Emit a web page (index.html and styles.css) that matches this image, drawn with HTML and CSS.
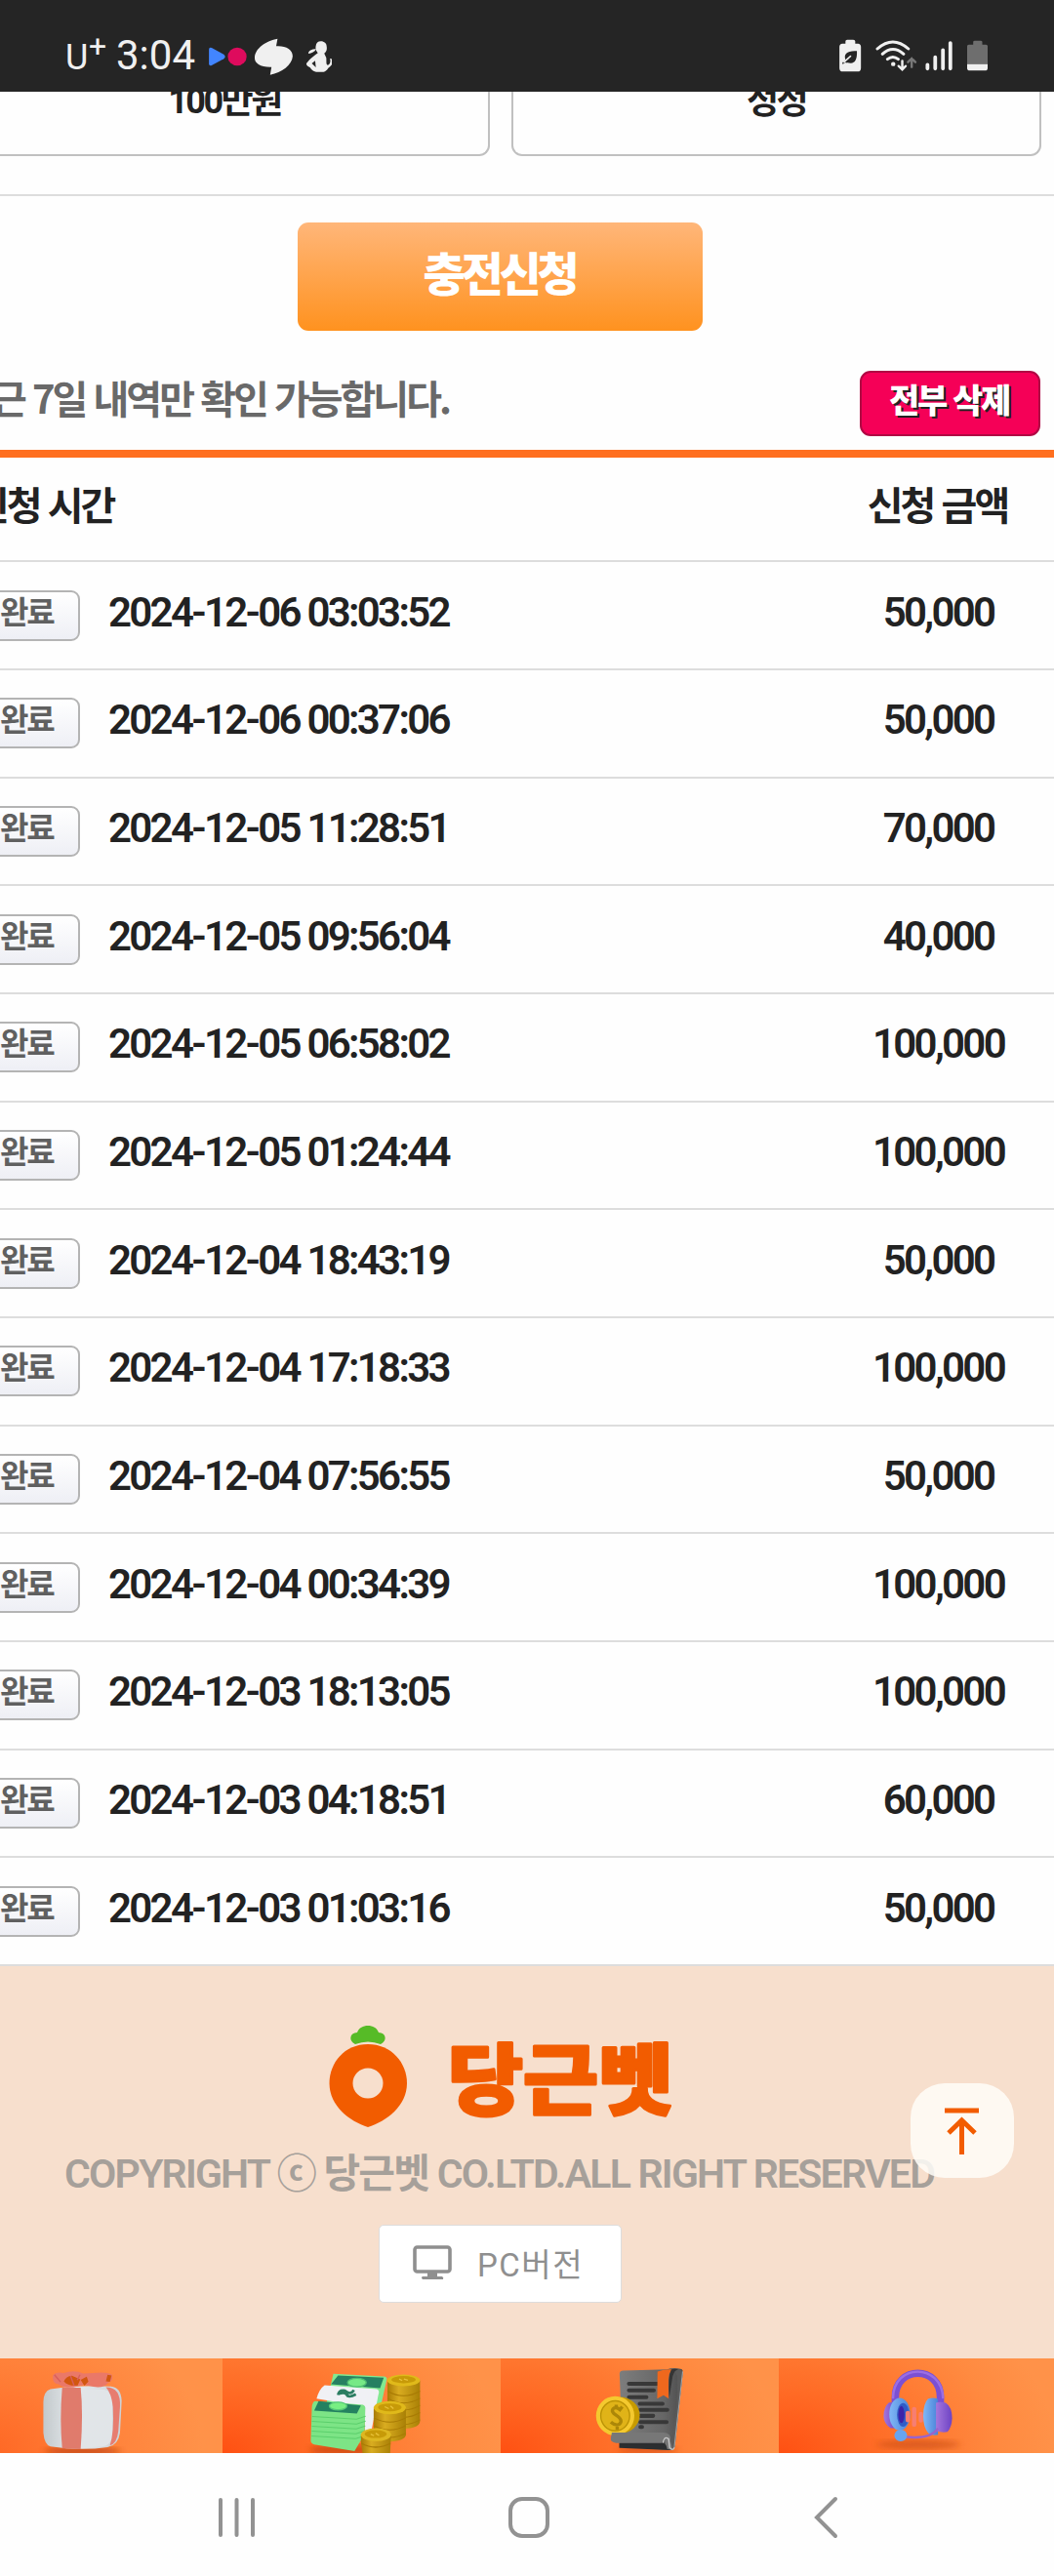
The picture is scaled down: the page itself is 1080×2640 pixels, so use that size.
FILE: index.html
```html
<!DOCTYPE html>
<html lang="ko">
<head>
<meta charset="utf-8">
<title>충전신청</title>
<link rel="stylesheet" href="styles.css">
</head>
<body>
<div class="screen">
  <header class="status">
    <span class="carrier">U</span><span class="carrier-plus">+</span>
    <span class="clock">3:04</span>
    <svg class="status-left" width="130" height="40" viewBox="610 115 377.5 120" preserveAspectRatio="none">
      <path d="M622 153q0-8 8-5l36 20q8 7 0 14l-36 20q-8 3-8-5z" fill="#4285ff"/>
      <ellipse cx="706" cy="175" rx="28" ry="28" fill="#de0b5d"/>
      <path d="M826 120L822 143C850 141 871 153 871 174C869 200 839 224 804 231L808 207C776 208 757 196 758 177C760 149 792 126 826 120Z" fill="#f0f0f0"/>
      <g fill="#f0f0f0"><path d="M940 142c1-9 6-14 15-14 10 0 17 7 17 15 2 12-1 18-7 22l6 14c1 11-1 21 4 22 7-1 10-10 7-20 4-1 9 3 9 9 0 9-9 15-14 20-4 6-8 10-14 12h-22c-10-2-14-7-18-13-5-4-12-7-11-13l9-11c8-7 13-13 25-21-5-7-8-12-6-22z"/><path d="M918 162c3-6 12-11 23-10-5 9-13 13-23 14z"/></g>
      <path d="M938 188l2 20-12-12z" fill="#252525"/>
    </svg>
    <svg class="status-right" width="160" height="40" viewBox="920 115 464.6 120" preserveAspectRatio="none">
      <path d="M950 128q0-5 5-5h18q6 0 6 5v7h8q9 1 9 10v65q0 11-10 11h-44q-10 0-10-11v-65q0-9 9-10h9z" fill="#f0f0f0"/>
      <path d="M984 158c1 25-5 37-18 37-8 0-13-1-17-2-3 3-6 5-8 5v-5c4-1 7-5 9-9-6-17 5-28 34-26z" fill="#252525"/>
      <path d="M946 192q14-14 19-18" stroke="#f0f0f0" stroke-width="5" fill="none" stroke-linecap="round"/>
      <g fill="none" stroke="#f0f0f0" stroke-width="9" stroke-linecap="round"><path d="M1045 151q46-42 92 0"/><path d="M1060 167q31-29 63 0"/><path d="M1075 183q16-13 32 0"/></g>
      <circle cx="1092" cy="198" r="6.500" fill="#f0f0f0"/>
      <path d="M1119 188v26m-11-10l11 11 10-11" fill="none" stroke="#f0f0f0" stroke-width="7" stroke-linecap="round"/>
      <path d="M1147 207v-26m-11 11l11-11 11 11" fill="none" stroke="#777" stroke-width="7" stroke-linecap="round"/>
      <path d="M1194 200v12M1217 177v35M1240 155v57M1262 133v79" stroke="#f0f0f0" stroke-width="11" stroke-linecap="round"/>
      <path d="M1330 130q0-4 5-4h17q5 0 5 4v8h11q5 0 5 5v55h-61v-55q0-5 5-5h13z" fill="#6e6e6e"/>
      <path d="M1312 198h61v12q0 8-8 8h-45q-8 0-8-8z" fill="#f0f0f0"/>
    </svg>
  </header>

  <section class="amounts">
    <div class="amount-box"><span>100만원</span></div>
    <div class="amount-box reset"><span>정정</span></div>
  </section>

  <section class="submit-area"><button class="submit">충전신청</button></section>

  <section class="history-top">
    <p class="notice">최근 7일 내역만 확인 가능합니다.</p>
    <button class="delete-all">전부 삭제</button>
  </section>

  <section class="history">
    <div class="history-head"><span class="time-title">신청 시간</span><span class="amount-col">신청 금액</span></div>
    <div class="row"><span class="badge">완료</span><time>2024-12-06 03:03:52</time><span class="amount-col">50,000</span></div>
    <div class="row"><span class="badge">완료</span><time>2024-12-06 00:37:06</time><span class="amount-col">50,000</span></div>
    <div class="row"><span class="badge">완료</span><time>2024-12-05 11:28:51</time><span class="amount-col">70,000</span></div>
    <div class="row"><span class="badge">완료</span><time>2024-12-05 09:56:04</time><span class="amount-col">40,000</span></div>
    <div class="row"><span class="badge">완료</span><time>2024-12-05 06:58:02</time><span class="amount-col">100,000</span></div>
    <div class="row"><span class="badge">완료</span><time>2024-12-05 01:24:44</time><span class="amount-col">100,000</span></div>
    <div class="row"><span class="badge">완료</span><time>2024-12-04 18:43:19</time><span class="amount-col">50,000</span></div>
    <div class="row"><span class="badge">완료</span><time>2024-12-04 17:18:33</time><span class="amount-col">100,000</span></div>
    <div class="row"><span class="badge">완료</span><time>2024-12-04 07:56:55</time><span class="amount-col">50,000</span></div>
    <div class="row"><span class="badge">완료</span><time>2024-12-04 00:34:39</time><span class="amount-col">100,000</span></div>
    <div class="row"><span class="badge">완료</span><time>2024-12-03 18:13:05</time><span class="amount-col">100,000</span></div>
    <div class="row"><span class="badge">완료</span><time>2024-12-03 04:18:51</time><span class="amount-col">60,000</span></div>
    <div class="row"><span class="badge">완료</span><time>2024-12-03 01:03:16</time><span class="amount-col">50,000</span></div>
  </section>

  <footer class="footer">
    <svg class="logo" width="360" height="110" viewBox="333 2073 360 110">
      <path d="M377 2095C401 2095 417 2114 417 2135C417 2158 396 2174 377 2180C358 2174 337.500 2158 337.500 2135C337.500 2114 353 2095 377 2095Z" fill="#f25c00"/>
      <circle cx="377" cy="2135" r="15.500" fill="#f7dfcd"/>
      <path d="M364 2095C357 2092 358 2083 366 2083C368 2078 372 2076 377 2076C382 2076 386 2078 388 2083C396 2083 397 2092 390 2095Q377 2090 364 2095Z" fill="#56bb27"/>
      <text class="logo-text" x="459" y="2161" textLength="231" lengthAdjust="spacingAndGlyphs">당근벳</text>
    </svg>
    <p class="copyright">COPYRIGHT ⓒ 당근벳 CO.LTD.ALL RIGHT RESERVED</p>
    <a class="pc-version">
      <svg width="40" height="35" viewBox="0 0 40 35"><rect x="2" y="2" width="36" height="25" rx="2.500" fill="none" stroke="#8f8f8f" stroke-width="3.600"/><path d="M15 27h10v5h5q2 1 1 3H10q-2-2 0-3h5z" fill="#8f8f8f"/></svg>
      <span>PC버전</span>
    </a>
    <a class="to-top">
      <svg width="36" height="48" viewBox="0 0 36 48"><path d="M0 3h35M17.500 48V13M4 26l13.500-13L31 26" fill="none" stroke="#f25c00" stroke-width="5"/></svg>
    </a>
  </footer>

  <nav class="menu">
    <a class="menu-item first">
      <svg width="228" height="97" viewBox="0 652 662 290" preserveAspectRatio="none">
        <defs>
          <linearGradient id="white" x1="0" x2="1"><stop offset="0" stop-color="#c3c9cc"/><stop offset=".4" stop-color="#e6eaed"/><stop offset="1" stop-color="#cdd1d5"/></linearGradient>
          <linearGradient id="gold" x1="0" x2="1"><stop offset="0" stop-color="#a97b05"/><stop offset=".35" stop-color="#d9ac20"/><stop offset="1" stop-color="#a98006"/></linearGradient>
          <linearGradient id="grey" x1="0" x2="1"><stop offset="0" stop-color="#7d7d7d"/><stop offset=".7" stop-color="#666"/><stop offset="1" stop-color="#4b4b4b"/></linearGradient>
          <linearGradient id="purple" x1="0" x2="1"><stop offset="0" stop-color="#a476dc"/><stop offset="1" stop-color="#6d43c4"/></linearGradient>
          <linearGradient id="blue" x1="0" x2="1"><stop offset="0" stop-color="#80b8f6"/><stop offset="1" stop-color="#4a82d8"/></linearGradient>
          <filter id="soft"><feGaussianBlur stdDeviation="9"/></filter>
        </defs>
        <ellipse cx="245" cy="936" rx="115" ry="12" fill="#b83d10" opacity=".75" filter="url(#soft)"/>
        <path d="M150 746Q245 732 330 738Q360 740 362 782L357 880Q352 918 320 924Q240 936 150 922Q132 916 129 880V785Q130 752 150 746Z" fill="url(#white)"/>
        <path d="M250 748h60q24 4 24 40v90q0 42-30 44l-60 4z" fill="#e1e5e8"/>
        <path d="M185 742h55q8 80 0 188l-55-2q-8-90 0-186z" fill="#e07b6c"/>
        <path d="M315 740q45 0 42 60l-5 75q-4 38-25 44 13-40 9-118-4-42-21-61z" fill="#e77d70"/>
        <path d="M157 705Q165 692 190 697Q220 686 248 698L290 696Q320 694 333 702Q338 722 322 726Q310 744 278 739L250 733L218 741Q185 742 175 731Q154 730 157 705Z" fill="#ea7868"/>
        <path d="M190 722q6-15 24-17l25 11-8 19q-30 2-41-13zM240 718l18-10 5 15-12 13zM320 702l12 2-5 20-12-2z" fill="#d2570f"/>
        <path d="M162 702l18 22M210 706l10 28M230 718l8-16" stroke="#d85e5c" stroke-width="4"/>
      </svg>
    </a>
    <a class="menu-item">
      <svg width="285" height="97" viewBox="662 652 828 290" preserveAspectRatio="none">
        <ellipse cx="1030" cy="932" rx="110" ry="16" fill="#c94410" opacity=".8" filter="url(#soft)"/>
        <path d="M992 699l150 8q11 1 9 9l-15 70-55 55-110-50z" fill="#82e990"/>
        <path d="M1006 704l136 7-11 32-146-12z" fill="#268061"/>
        <ellipse cx="1062" cy="726" rx="28" ry="13" fill="#76e987" stroke="#4fbd72" stroke-width="4"/>
        <path d="M966 734l155 12q10 4 5 17l-20 107-20 10V800L942 775q8-30 24-41z" fill="#f0f1f5"/>
        <path d="M1006 764q3-16 20-13 18 15 27-2M1008 760q20-6 24 4t27-2M1020 749l18 20" fill="none" stroke="#2b7d62" stroke-width="8"/>
        <path d="M938 783l142 11q9 4 7 15l-2 75-30 52-120-20q-12-3-10-18l3-95q2-20 10-20z" fill="#7de486"/>
        <path d="M948 783l126 13-12 25-127-9z" fill="#248160"/>
        <ellipse cx="1006" cy="798" rx="26" ry="12" fill="#78ef83" stroke="#55c977" stroke-width="4"/>
        <path d="M929 830l132 8 27-9M928 845l133 8 27-9M928 860l132 8 27-9M928 875l131 8 27-9M927 890l131 8 28-9" stroke="#5bcf6c" stroke-width="3" fill="none"/>
        <path d="M1153 722v120q0 25 48 25 46 0 49-22V720z" fill="url(#gold)"/>
        <g fill="none" stroke="#a87b05" stroke-width="3"><path d="M1153 752q48 29 97 0M1153 774q48 29 97 0M1153 796q48 29 97 0M1153 818q48 29 97 0M1153 840q48 29 97 0"/></g>
        <ellipse cx="1201" cy="719" rx="49" ry="18" fill="#e0b91a"/><ellipse cx="1201" cy="717" rx="36" ry="11" fill="#c79a08"/>
        <path d="M1112 805v84q10 18 49 18 43-2 47-20v-82z" fill="url(#gold)"/>
        <path d="M1112 834q48 26 96 0M1112 858q48 26 96 0M1112 881q48 26 96 0" fill="none" stroke="#a87b05" stroke-width="3"/>
        <ellipse cx="1160" cy="803" rx="48" ry="20" fill="#e0b91a"/><ellipse cx="1160" cy="802" rx="35" ry="12" fill="#c79a08"/>
        <path d="M1074 886v22l5 34h82l3-56z" fill="url(#gold)"/><path d="M1075 912q43 24 87 0" fill="none" stroke="#a87b05" stroke-width="4"/>
        <ellipse cx="1119" cy="886" rx="45" ry="20" fill="#ddb721"/><ellipse cx="1118" cy="884" rx="33" ry="12" fill="#c79a08"/>
        <path d="M1188 715l9 5m5-5l12 4M1145 800l12 6m5-8l9 8M1103 884l10 5m5-8l10 7" stroke="#e8c139" stroke-width="4"/>
      </svg>
    </a>
    <a class="menu-item">
      <svg width="285" height="97" viewBox="-78 652 828 290" preserveAspectRatio="none">
        <ellipse cx="360" cy="932" rx="90" ry="11" fill="#c94410" opacity=".6" filter="url(#soft)"/>
        <path d="M276 698q1-9 10-9l132-3q15-8 43-1 5 4 3 14l-25 225q-2 10-14 9l-145-10V805z" fill="url(#grey)"/>
        <path d="M434 687q27-7 30 10l-23 225q-4 13-18 10l10-45q18-90 15-175-1-16-14-25z" fill="#5a5a5a"/>
        <path d="M464 692l-25 232" stroke="#a5a5a5" stroke-width="3"/>
        <path d="M304 730h84M304 750h74M304 771h52M336 791h68M338 810h80M338 828h38M338 847h78M338 862h5" stroke="#383838" stroke-width="12" stroke-linecap="round"/>
        <path d="M389 692q23-8 45-6-12 8-12 35v54l-15-10-19 10z" fill="#ef681d"/><path d="M430 686q12-4 21 0-12 2-17 21l-10 65q-5-62 6-86z" fill="#353535"/>
        <ellipse cx="277" cy="826" rx="59" ry="56" fill="#c79b00"/><ellipse cx="263" cy="828" rx="57" ry="60" fill="#f4c92f"/><ellipse cx="263" cy="828" rx="43" ry="46" fill="#e0b318" stroke="#bb9306" stroke-width="4"/>
        <path d="M284 800l-7 9c-13-13-27-2-21 8 4 10 26 13 24 29-3 12-17 13-30 1M266 794v10m3 57v10" fill="none" stroke="#ac8708" stroke-width="10"/>
        <path d="M275 910v16l153 7-22-25z" fill="#2c2e30"/><path d="M253 879h155q23 1 20 28l7 25-17-2-8-30q-4-8-8 11H266q-18-1-16-15z" fill="#777"/><path d="M405 911q4-23 17-12l3 26q10 12 14 0" fill="none" stroke="#c8c8c8" stroke-width="4"/>
      </svg>
    </a>
    <a class="menu-item">
      <svg width="285" height="97" viewBox="750 652 828 290" preserveAspectRatio="none">
        <ellipse cx="1165" cy="916" rx="125" ry="14" fill="#c94e15" opacity=".65" filter="url(#soft)"/>
        <path d="M1097 796v-25c0-98 134-98 134 0v30" fill="none" stroke="#7b50d3" stroke-width="22"/>
        <path d="M1090 775c0-110 146-110 149 0" fill="none" stroke="#9b6ee3" stroke-width="7"/>
        <path d="M1078 787q-16 13-16 44 1 22 21 35h20v-80z" fill="url(#purple)"/>
        <ellipse cx="1110" cy="823" rx="31" ry="50" fill="url(#blue)"/><ellipse cx="1120" cy="825" rx="18" ry="36" fill="#315cc6"/><ellipse cx="1115" cy="824" rx="9" ry="26" fill="#3c23aa"/>
        <path d="M1194 776q16-6 30 0v110q-18 4-29-5-15-19-15-52 0-38 14-53z" fill="url(#blue)"/>
        <path d="M1218 788q10-5 29 0 19 13 19 47-1 28-14 42-14 4-34-3z" fill="url(#purple)"/>
        <path d="M1134 819v22M1153 807v48M1173 822v20" stroke="#f77e72" stroke-width="13" stroke-linecap="round"/>
        <path d="M1125 892q75 10 99-26" fill="none" stroke="#9964cc" stroke-width="7"/><ellipse cx="1113" cy="888" rx="19" ry="18" fill="#68a4ef"/>
      </svg>
    </a>
  </nav>

  <div class="system-nav">
    <svg width="38" height="44" viewBox="0 0 38 44"><path d="M3 4v36M19.500 4v36M36 4v36" stroke="#929292" stroke-width="4" stroke-linecap="round"/></svg>
    <svg width="44" height="44" viewBox="0 0 44 44"><rect x="3" y="3" width="38" height="38" rx="12" fill="none" stroke="#929292" stroke-width="4"/></svg>
    <svg width="26" height="44" viewBox="0 0 26 44"><path d="M23 3L4 22l19 19" fill="none" stroke="#929292" stroke-width="4" stroke-linecap="round"/></svg>
  </div>
</div>
</body>
</html>
```

FILE: styles.css
```css
* { box-sizing: border-box; }
body { margin: 0; background: #fefefe; }
button { font: inherit; padding: 0; border: 0; }
p { margin: 0; }
svg { display: block; flex: none; }

.screen {
  width: 1080px;
  height: 2640px;
  overflow: hidden;
  display: flex;
  flex-direction: column;
  font-family: Roboto, "Noto Sans CJK KR", sans-serif;
  color: #222;
  white-space: nowrap;
}
.screen > * { flex: none; }

.status {
  height: 94px;
  background: #252525;
  color: #f0f0f0;
  display: flex;
  align-items: flex-start;
  padding: 0 64px 0 67px;
}
.carrier { font-size: 36px; line-height: 44px; padding-top: 37px; width: 24px; }
.carrier-plus { font-size: 32px; line-height: 32px; padding-top: 31px; width: 28px; }
.clock { font-size: 42px; line-height: 48px; padding-top: 33px; width: 91px; }
.status-left { margin-top: 38px; }
.status-right { margin: 38px 0 0 auto; }

.amounts {
  height: 107px;
  border-bottom: 2px solid #ddd;
  display: flex;
  gap: 22px;
}
.amount-box {
  width: 562px;
  height: 66px;
  margin-left: -60px;
  border: 2px solid #c0c0c0;
  border-top: 0;
  border-radius: 0 0 11px 11px;
  overflow: hidden;
  text-align: center;
  font-size: 36px;
  font-weight: 700;
  letter-spacing: -2.5px;
  line-height: 40px;
  padding-left: 18px;
}
.amount-box span { display: block; margin-top: -10px; }
.amount-box.reset { width: 543px; margin-left: 0; padding-left: 0; }

.submit-area { height: 170px; padding: 27px 0 0 305px; }
.submit {
  width: 415px;
  height: 111px;
  border-radius: 11px;
  background: linear-gradient(#ffb679, #ff921f);
  color: #fff;
  font-family: "Noto Sans CJK KR", sans-serif;
  font-size: 47px;
  font-weight: 900;
  letter-spacing: -4.200px;
  line-height: 100px;
  padding: 0 2px 11px 0;
}

.history-top {
  height: 90px;
  display: flex;
  justify-content: space-between;
  padding: 9px 14px 0 0;
}
.notice {
  margin-left: -56px;
  width: 516px;
  display: flex;
  justify-content: flex-end;
  font-family: "Noto Sans CJK KR", sans-serif;
  font-size: 40px;
  font-weight: 700;
  letter-spacing: -3px;
  line-height: 54px;
  color: #696969;
}
.delete-all {
  width: 185px;
  height: 67px;
  border: 2px solid #b00744;
  border-radius: 11px;
  background: #f50057;
  color: #fff;
  font-family: "Noto Sans CJK KR", sans-serif;
  font-size: 34px;
  font-weight: 900;
  letter-spacing: -2.300px;
  line-height: 54px;
  padding: 0 2px 10px 0;
  text-shadow: 2px 2px 0 #222;
}

.history { border-top: 8px solid #ff6f1f; }
.history-head, .row {
  display: flex;
  align-items: center;
  border-bottom: 2px solid #ddd;
}
.history-head {
  height: 107.200px;
  font-family: "Noto Sans CJK KR", sans-serif;
  font-size: 40px;
  font-weight: 700;
  letter-spacing: -3px;
  line-height: 56px;
  padding-bottom: 12px;
}
.time-title { margin-left: -27px; }
.amount-col { width: 241px; margin: 0 -2px 0 auto; text-align: center; }
.history-head .amount-col { margin-right: -1px; }
.row { height: 110.700px; }
.badge {
  width: 108px;
  height: 52px;
  margin: 0 29px 0 -26px;
  padding-left: 24px;
  border: 2px solid #b4b4b4;
  border-radius: 9px;
  background: linear-gradient(#fff, #eeeff5);
  font-family: "Noto Sans CJK KR", sans-serif;
  font-size: 32px;
  font-weight: 700;
  letter-spacing: -2.300px;
  line-height: 36px;
  color: #606060;
}
.row time, .row .amount-col {
  font-size: 42px;
  font-weight: 600;
  letter-spacing: -2.700px;
  line-height: 48px;
  padding-bottom: 6px;
}

.footer {
  height: 402px;
  padding-top: 58px;
  background: #f7dfcd;
  position: relative;
}
.logo { margin-left: 333px; }
.logo-text {
  font-family: "Noto Sans CJK KR", sans-serif;
  font-size: 79px;
  font-weight: 900;
  fill: #f25c00;
  stroke: #f25c00;
  stroke-width: 3;
  stroke-linejoin: round;
}
.copyright {
  margin: 18px 0 0 66px;
  height: 54px;
  line-height: 54px;
  font-size: 41px;
  font-weight: 600;
  letter-spacing: -1.750px;
  color: #a6a09a;
}
.pc-version {
  display: flex;
  align-items: center;
  gap: 26px;
  width: 249px;
  height: 80px;
  margin: 25px 0 0 388px;
  padding: 0 0 3px 34px;
  border: 1px solid #ddd;
  border-radius: 5px;
  background: #fff;
  color: #8f8f8f;
  font-size: 33px;
  font-weight: 400;
  letter-spacing: 1.500px;
}
.to-top {
  position: absolute;
  left: 933px;
  top: 120px;
  width: 106px;
  height: 97px;
  border-radius: 35px;
  background: rgba(255, 253, 248, .86);
  display: flex;
  justify-content: center;
  padding-top: 25px;
}

.menu { display: flex; height: 97px; }
.menu-item {
  width: 285px;
  flex: none;
  background: radial-gradient(ellipse 285px 190px at 0 100%, #ff5012 0, #ff6c26 35%, #ff8a40 80%, #ff9249 100%);
}
.menu-item.first {
  width: 228px;
  background: radial-gradient(ellipse 228px 170px at -20px 100%, #ff6522 0, #ff7f38 50%, #ff9249 100%);
}

.system-nav {
  height: 126px;
  background: #fefefe;
  display: grid;
  grid-template-columns: 300px 300px 1fr;
  justify-items: center;
  align-items: center;
  padding: 6px 0 0 92px;
}
.system-nav svg:last-child { margin-right: 80px; }
```
